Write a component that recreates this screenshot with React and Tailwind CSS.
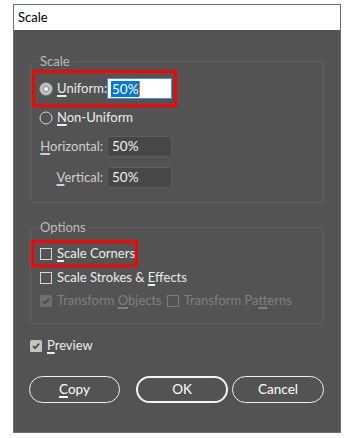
const font = { fontFamily: 'Lato, "Noto Sans", sans-serif' };

const Radio = ({ checked }) => (
  <svg width="14" height="14" viewBox="0 0 14 14" className="shrink-0">
    {checked ? (
      <>
        <circle cx="7" cy="7" r="6.5" fill="#bdbdbd" />
        <circle cx="7" cy="7" r="2.6" fill="#f2f2f2" stroke="#8c8c8c" strokeWidth="1" />
      </>
    ) : (
      <circle cx="7" cy="7" r="6" fill="none" stroke="#d4d4d4" strokeWidth="1" />
    )}
  </svg>
);

const Check = ({ checked, disabled }) => {
  if (!checked) {
    return (
      <span
        className={`block w-[12px] h-[12px] shrink-0 border ${
          disabled ? "border-[#7a7a7a]" : "border-[#d6d6d6]"
        }`}
      />
    );
  }
  return (
    <svg width="12" height="12" viewBox="0 0 12 12" className="shrink-0">
      <rect x="0" y="0" width="12" height="12" rx="1.5" fill={disabled ? "#6f6f6f" : "#c4c4c4"} />
      <path
        d="M3 6.2 L5 8.2 L9.2 3.6"
        fill="none"
        stroke={disabled ? "#4c4c4c" : "#4f4f4f"}
        strokeWidth="1.8"
      />
    </svg>
  );
};

const U = ({ children }) => (
  <span className="underline decoration-[1.5px] underline-offset-[2px]">{children}</span>
);

const DarkInput = ({ value }) => (
  <div className="ml-[4px] w-[65px] h-[21px] rounded-[2px] bg-[#474747] border border-[#5d5d5d] flex items-center pl-[4px] text-[13.5px] text-[#f2f2f2]">
    {value}
  </div>
);

export default function App() {
  return (
    <div className="min-h-screen bg-white pt-[4px] pl-[13px] whitespace-nowrap" style={font}>
      <div className="w-[328px] h-[429px] border border-[#6e6e6e] flex flex-col">
        {/* title bar */}
        <div className="h-[25px] bg-white flex items-center pl-[4px] text-[13px] text-black">Scale</div>

        <div className="flex-1 bg-[#535353] px-[16px] pt-[23px] text-[13px] text-[#ececec]">
          {/* Scale group */}
          <fieldset className="border border-[#616161] rounded-[3px] pb-[14px]">
            <legend className="ml-[6px] px-[3px] h-[16px] leading-[16px] text-[#bcbcbc]">Scale</legend>

            <div className="ml-[1px] mt-[1px] w-[145px] h-[37px] border-[3px] border-[#ff0000] flex items-center pl-[4px]">
              <Radio checked />
              <span className="ml-[4px] w-[50px]">
                <U>U</U>niform:
              </span>
              <div className="w-[65px] h-[21px] bg-white border border-[#4a90e2] flex items-center pl-[3px] text-[13.5px]">
                <span className="bg-[#0078d7] text-white leading-[16px] px-[1px]">50%</span>
                <span className="w-[1px] h-[15px] bg-[#e07a20]" />
              </div>
            </div>

            <div className="h-[22px] flex items-center pl-[8px]">
              <Radio />
              <span className="ml-[4px]">
                <U>N</U>on-Uniform
              </span>
            </div>

            <div className="mt-[7px] flex items-center">
              <span className="w-[72px] text-right text-[#d0d0d0]">
                <U>H</U>orizontal:
              </span>
              <DarkInput value="50%" />
            </div>

            <div className="mt-[10px] flex items-center">
              <span className="w-[72px] text-right text-[#d0d0d0]">
                <U>V</U>ertical:
              </span>
              <DarkInput value="50%" />
            </div>
          </fieldset>

          {/* Options group */}
          <fieldset className="mt-[16px] border border-[#616161] rounded-[3px] pb-[11px]">
            <legend className="ml-[6px] px-[3px] h-[16px] leading-[16px] text-[#bcbcbc]">Options</legend>

            <div className="mt-[5px] w-[107px] h-[27px] border-[3px] border-[#ff0000] flex items-center pl-[6px]">
              <Check />
              <span className="ml-[5px]">
                <U>S</U>cale Corners
              </span>
            </div>

            <div className="h-[22px] flex items-center pl-[9px]">
              <Check />
              <span className="ml-[5px]">
                Scale Strokes &amp; <U>E</U>ffects
              </span>
            </div>

            <div className="mt-[1px] h-[22px] flex items-center pl-[9px] text-[#7f7f7f]">
              <Check checked disabled />
              <span className="ml-[5px]">
                Transform <U>O</U>bjects
              </span>
              <span className="ml-[5px]">
                <Check disabled />
              </span>
              <span className="ml-[5px]">
                Transform Pa<U>t</U>terns
              </span>
            </div>
          </fieldset>

          {/* Preview */}
          <div className="mt-[14px] h-[16px] flex items-center">
            <Check checked />
            <span className="ml-[5px]">
              <U>P</U>review
            </span>
          </div>

          {/* Buttons */}
          <div className="mt-[22px] flex items-center ml-[-1px]">
            <button className="w-[92px] h-[27px] rounded-full border border-[#f0f0f0] text-[13.5px] text-white">
              <U>C</U>opy
            </button>
            <button className="ml-[16px] w-[93px] h-[27px] rounded-full border-2 border-[#f4f4f4] text-[13.5px] text-white">
              OK
            </button>
            <button className="ml-[4px] w-[93px] h-[27px] rounded-full border border-[#f0f0f0] text-[13.5px] text-white">
              Cancel
            </button>
          </div>
        </div>
      </div>
    </div>
  );
}
